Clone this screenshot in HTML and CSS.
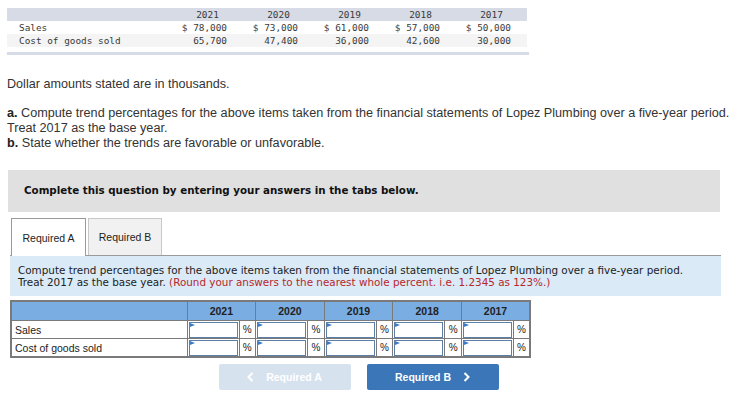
FILE: index.html
```html
<!DOCTYPE html>
<html lang="en">
<head>
<meta charset="utf-8">
<title>Trend percentages</title>
<link rel="stylesheet" href="styles.css">
</head>
<body>
<div class="page">
  <table class="data">
    <colgroup>
      <col class="c-label"><col class="c-num"><col class="c-num"><col class="c-num"><col class="c-num"><col class="c-num">
    </colgroup>
    <thead>
      <tr><th></th><th>2021</th><th>2020</th><th>2019</th><th>2018</th><th>2017</th></tr>
    </thead>
    <tbody>
      <tr><td class="label">Sales</td><td class="num">$ 78,000</td><td class="num">$ 73,000</td><td class="num">$ 61,000</td><td class="num">$ 57,000</td><td class="num">$ 50,000</td></tr>
      <tr class="alt"><td class="label">Cost of goods sold</td><td class="num">65,700</td><td class="num">47,400</td><td class="num">36,000</td><td class="num">42,600</td><td class="num">30,000</td></tr>
    </tbody>
  </table>
  <div class="data-rule"></div>

  <p class="note">Dollar amounts stated are in thousands.</p>
  <p class="question"><b>a.</b> Compute trend percentages for the above items taken from the financial statements of Lopez Plumbing over a five-year period.<br>Treat 2017 as the base year.<br><b>b.</b> State whether the trends are favorable or unfavorable.</p>

  <div class="instr">Complete this question by entering your answers in the tabs below.</div>

  <div class="tabs">
    <div class="tab active">Required A</div>
    <div class="tab">Required B</div>
  </div>

  <div class="panel">
    <div class="prompt">Compute trend percentages for the above items taken from the financial statements of Lopez Plumbing over a five-year period.<br>Treat 2017 as the base year. <span class="red">(Round your answers to the nearest whole percent. i.e. 1.2345 as 123%.)</span></div>

    <table class="answer">
      <colgroup>
        <col class="a-label">
        <col class="a-in"><col class="a-pct">
        <col class="a-in"><col class="a-pct">
        <col class="a-in"><col class="a-pct">
        <col class="a-in"><col class="a-pct">
        <col class="a-in"><col class="a-pct">
      </colgroup>
      <thead>
        <tr><th></th><th colspan="2">2021</th><th colspan="2">2020</th><th colspan="2">2019</th><th colspan="2">2018</th><th colspan="2">2017</th></tr>
      </thead>
      <tbody>
        <tr>
          <td class="row-label">Sales</td>
          <td class="in"><span class="box"><span class="flag"></span></span></td><td class="pct">%</td>
          <td class="in"><span class="box"><span class="flag"></span></span></td><td class="pct">%</td>
          <td class="in"><span class="box"><span class="flag"></span></span></td><td class="pct">%</td>
          <td class="in"><span class="box"><span class="flag"></span></span></td><td class="pct">%</td>
          <td class="in"><span class="box"><span class="flag"></span></span></td><td class="pct">%</td>
        </tr>
        <tr>
          <td class="row-label">Cost of goods sold</td>
          <td class="in"><span class="box"><span class="flag"></span></span></td><td class="pct">%</td>
          <td class="in"><span class="box"><span class="flag"></span></span></td><td class="pct">%</td>
          <td class="in"><span class="box"><span class="flag"></span></span></td><td class="pct">%</td>
          <td class="in"><span class="box"><span class="flag"></span></span></td><td class="pct">%</td>
          <td class="in"><span class="box"><span class="flag"></span></span></td><td class="pct">%</td>
        </tr>
      </tbody>
    </table>

    <div class="nav">
      <button class="btn prev"><svg width="7" height="10" viewBox="0 0 7 10"><polyline points="5.5,1 1.5,5 5.5,9" fill="none" stroke="#fff" stroke-width="2"/></svg><span>Required A</span></button>
      <button class="btn next"><span>Required B</span><svg width="7" height="10" viewBox="0 0 7 10"><polyline points="1.5,1 5.5,5 1.5,9" fill="none" stroke="#fff" stroke-width="2"/></svg></button>
    </div>
  </div>
</div>
</body>
</html>
```

FILE: styles.css
```css
html, body {
  margin: 0;
  padding: 0;
  background: #fff;
}

body {
  font-family: "Liberation Sans", Arial, sans-serif;
  color: #333;
}

.page {
  padding: 8px 0 0 7px;
}

/* ---------- source data table ---------- */
.data {
  border-collapse: collapse;
  table-layout: fixed;
  width: 520px;
  font-family: "DejaVu Sans Mono", "Liberation Mono", monospace;
  font-size: 9.4px;
  color: #3a3a3a;
}

.data .c-label { width: 165px; }
.data .c-num { width: 71px; }

.data th,
.data td {
  height: 13px;
  padding: 0;
  line-height: 13px;
  white-space: nowrap;
}

.data thead tr {
  background: #d6dbe5;
}

.data th {
  font-weight: normal;
  text-align: center;
}

.data .label {
  padding-left: 12px;
  text-align: left;
}

.data .num {
  text-align: right;
  padding-right: 16px;
}

.data .alt {
  background: #f4f4f4;
}

.data-rule {
  width: 522px;
  height: 3px;
  margin-top: 5px;
  background: #d6dbe5;
}

/* ---------- question text ---------- */
.note {
  margin: 22px 0 0;
  font-size: 12.6px;
  line-height: 15px;
  color: #333;
}

.question {
  margin: 14px 0 0;
  font-size: 12.65px;
  line-height: 15px;
  color: #333;
}

.question b {
  color: #222;
}

.instr {
  width: 712px;
  margin: 19px 0 0 1px;
  height: 42px;
  box-sizing: border-box;
  padding: 0 0 2px 16px;
  line-height: 40px;
  background: #e0e0e0;
  font-family: "DejaVu Sans", Verdana, sans-serif;
  font-weight: bold;
  font-size: 10.3px;
  color: #111;
}

/* ---------- tabs ---------- */
.tabs {
  display: flex;
  gap: 2px;
  margin: 6px 0 0 4px;
}

.tab {
  width: 74px;
  height: 37px;
  box-sizing: border-box;
  border: 1px solid #c8c8c8;
  border-bottom: none;
  background: #f1f1f1;
  display: flex;
  align-items: center;
  justify-content: center;
  font-size: 10.5px;
  color: #222;
}

.tab.active {
  width: 75px;
  height: 38px;
  margin-bottom: -1px;
  border-color: #9a9a9a;
  background: #fff;
  position: relative;
  z-index: 1;
}

/* ---------- panel ---------- */
.panel {
  width: 711px;
  margin-left: 3px;
  border-top: 1px solid #9a9a9a;
}

.prompt {
  height: 40px;
  box-sizing: border-box;
  padding: 8px 8px 0;
  background: #daeaf7;
  font-family: "DejaVu Sans", Verdana, sans-serif;
  font-size: 10.4px;
  line-height: 12px;
  color: #222;
  white-space: nowrap;
}

.red {
  color: #b8262b;
}

/* ---------- answer table ---------- */
.answer {
  margin-top: 4px;
  border-collapse: collapse;
  table-layout: fixed;
  width: 519px;
  border: 2px solid #7a7a7a;
  font-size: 10.5px;
  color: #222;
}

.answer .a-label { width: 176px; }
.answer .a-in { width: 52px; }
.answer .a-pct { width: 16.6px; }

.answer th {
  height: 18px;
  padding: 0;
  background: #7aade2;
  border: 1px solid #7a7a7a;
  font-weight: bold;
  font-size: 10.5px;
  color: #222;
  text-align: center;
}

.answer td {
  height: 17px;
  padding: 0;
  border: 1px solid #7a7a7a;
  background: #fff;
}

.answer .row-label {
  padding-left: 3px;
  white-space: nowrap;
}

.answer td.in {
  border-right: none;
  padding: 0 1px;
}

.answer td.pct {
  border-left: 1px solid #7a7a7a;
  text-align: center;
  font-size: 10px;
}

.box {
  display: block;
  position: relative;
  height: 16px;
  box-sizing: border-box;
  border: 1px solid #5d7fa6;
  border-left-width: 1.5px;
  background: #fff;
}

.flag {
  position: absolute;
  left: 0;
  top: 0;
  width: 0;
  height: 0;
  border-left: 5px solid #3b7bc6;
  border-top: 2px solid transparent;
  border-bottom: 2px solid transparent;
}

/* ---------- navigation ---------- */
.nav {
  display: flex;
  justify-content: center;
  gap: 16px;
  margin-top: 6px;
  padding-right: 14px;
}

.btn {
  width: 132px;
  height: 26px;
  border: none;
  border-radius: 2px;
  display: flex;
  align-items: center;
  justify-content: center;
  gap: 12px;
  font-family: "Liberation Sans", Arial, sans-serif;
  font-weight: bold;
  font-size: 10.5px;
  color: #fff;
  padding: 0;
}

.btn.prev {
  background: #d7e2ef;
}

.btn.next {
  background: #3a76b8;
}
```
